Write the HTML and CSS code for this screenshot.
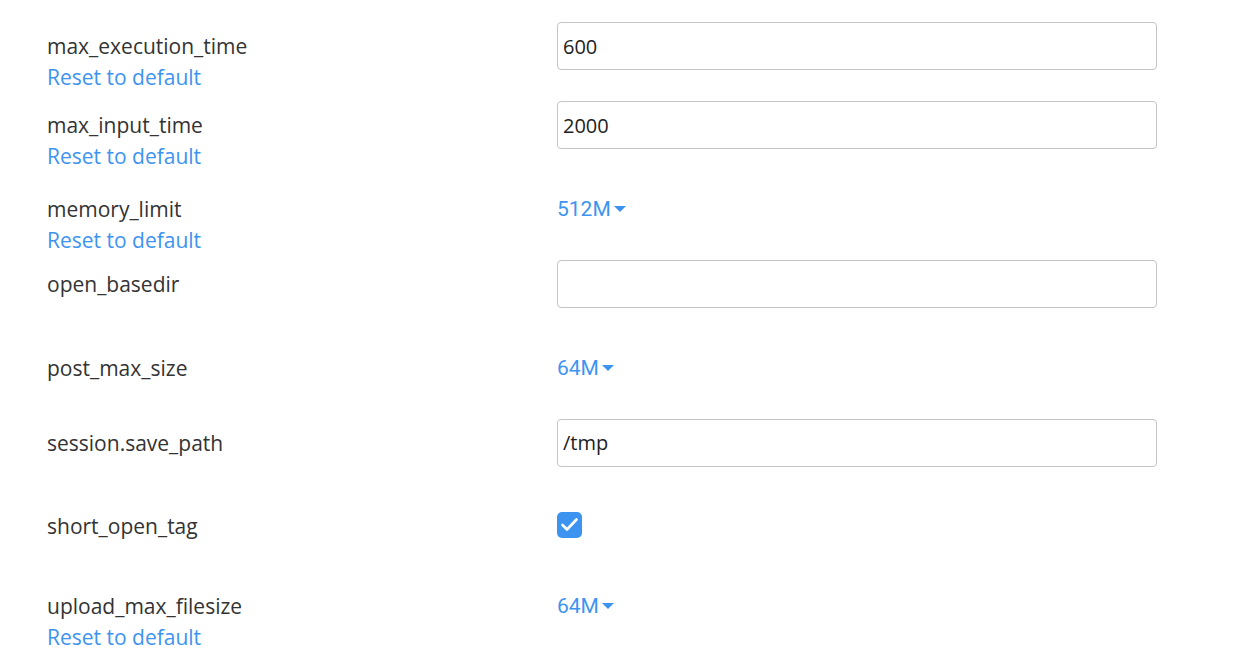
FILE: index.html
```html
<!DOCTYPE html>
<html>
<head>
<meta charset="utf-8">
<link rel="stylesheet" href="styles.css">
</head>
<body>
<div class="settings">
  <div class="row">
    <div class="label-col"><div class="name">max_execution_time</div><a class="reset" href="#">Reset to default</a></div>
    <div class="control-col"><input class="text-input" type="text" value="600"></div>
  </div>
  <div class="row">
    <div class="label-col"><div class="name">max_input_time</div><a class="reset" href="#">Reset to default</a></div>
    <div class="control-col"><input class="text-input" type="text" value="2000"></div>
  </div>
  <div class="row row-plain">
    <div class="label-col"><div class="name">memory_limit</div><a class="reset" href="#">Reset to default</a></div>
    <div class="control-col"><span class="dropdown">512M<span class="caret"></span></span></div>
  </div>
  <div class="row">
    <div class="label-col"><div class="name">open_basedir</div></div>
    <div class="control-col"><input class="text-input" type="text" value=""></div>
  </div>
  <div class="row row-plain">
    <div class="label-col"><div class="name">post_max_size</div></div>
    <div class="control-col"><span class="dropdown">64M<span class="caret"></span></span></div>
  </div>
  <div class="row">
    <div class="label-col"><div class="name">session.save_path</div></div>
    <div class="control-col"><input class="text-input" type="text" value="/tmp"></div>
  </div>
  <div class="row row-plain">
    <div class="label-col"><div class="name">short_open_tag</div></div>
    <div class="control-col"><span class="checkbox"><svg width="25" height="25" viewBox="0 0 25 25"><path d="M5.5 13 L10 17.5 L19.5 7.5" fill="none" stroke="#fff" stroke-width="2.6" stroke-linecap="round" stroke-linejoin="round"/></svg></span></div>
  </div>
  <div class="row row-plain">
    <div class="label-col"><div class="name">upload_max_filesize</div><a class="reset" href="#">Reset to default</a></div>
    <div class="control-col"><span class="dropdown">64M<span class="caret"></span></span></div>
  </div>
</div>
</body>
</html>
```
FILE: styles.css
```css
html, body {
  margin: 0;
  padding: 0;
  background: #fff;
}
body {
  font-family: "Open Sans", sans-serif;
  font-size: 21px;
  color: #333;
}
.settings {
  padding: 22px 0 0 47px;
}
.row {
  display: grid;
  grid-template-columns: 510px 600px;
  height: 79.4px;
}
.label-col {
  padding-top: 9px;
  line-height: 31px;
}
.name {
  color: #333;
}
.reset {
  display: block;
  color: #3d94f0;
  text-decoration: none;
}
.text-input {
  box-sizing: border-box;
  width: 600px;
  height: 48px;
  border: 1px solid #c4c4c4;
  border-radius: 4px;
  padding: 0 5px;
  font-family: "Open Sans", sans-serif;
  font-size: 20px;
  color: #222;
  outline: none;
}
.row-plain .label-col {
  padding-top: 13px;
}
.row-plain .control-col {
  padding-top: 13px;
}
.dropdown {
  display: inline-flex;
  align-items: center;
  font-family: Roboto, sans-serif;
  font-size: 21px;
  line-height: 31px;
  color: #3d94f0;
}
.caret {
  width: 0;
  height: 0;
  margin-left: 3px;
  border-left: 6px solid transparent;
  border-right: 6px solid transparent;
  border-top: 6px solid #3d94f0;
}
.checkbox {
  display: block;
  width: 25px;
  height: 26px;
  margin-top: 1px;
  background: #3d94f0;
  border-radius: 5px;
}
.checkbox svg {
  display: block;
}
```
